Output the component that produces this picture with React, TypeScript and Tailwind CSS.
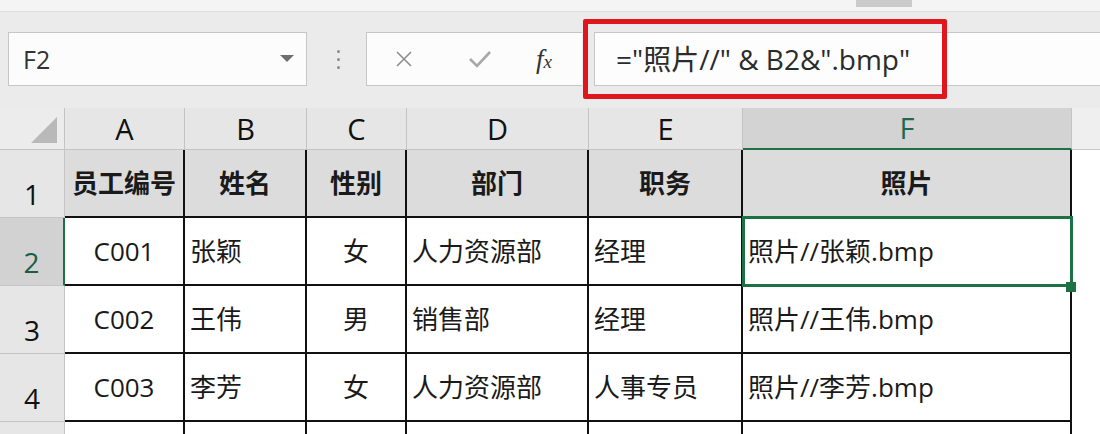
const colLetters = ['A', 'B', 'C', 'D', 'E', 'F'];

const rows = [
  ['员工编号', '姓名', '性别', '部门', '职务', '照片'],
  ['C001', '张颖', '女', '人力资源部', '经理', '照片//张颖.bmp'],
  ['C002', '王伟', '男', '销售部', '经理', '照片//王伟.bmp'],
  ['C003', '李芳', '女', '人力资源部', '人事专员', '照片//李芳.bmp'],
];

const align = [
  'justify-center',
  'justify-start pl-[5px]',
  'justify-center',
  'justify-start pl-[5px]',
  'justify-start pl-[5px]',
  'justify-start pl-[5px]',
];

export default function App() {
  return (
    <div className="h-[434px] w-[1100px] overflow-hidden bg-[#ebebeb] font-['Open_Sans','Noto_Sans_CJK_SC',sans-serif] text-[#1a1a1a]">
      {/* top strip */}
      <div className="h-[12px] border-b border-[#dedede] bg-[#f4f4f4] pl-[856px]">
        <div className="h-[7px] w-[56px] bg-[#cbcbcb]" />
      </div>

      {/* formula toolbar */}
      <div className="relative flex h-[96px] items-start pt-[20px]">
        <div className="ml-[8px] flex h-[54px] w-[299px] items-center justify-between border border-[#c6c6c6] bg-[#fcfcfc] pl-[14px] pr-[12px]">
          <span className="text-[25px] leading-none text-[#333]">F2</span>
          <svg width="14" height="8" viewBox="0 0 14 8">
            <polygon points="0,0 14,0 7,7" fill="#6f6f6f" />
          </svg>
        </div>
        <div className="ml-[29px] flex h-[54px] w-[4px] flex-col items-center justify-center gap-[5px]">
          <div className="h-[3px] w-[3px] rounded-full bg-[#8c8c8c]" />
          <div className="h-[3px] w-[3px] rounded-full bg-[#8c8c8c]" />
          <div className="h-[3px] w-[3px] rounded-full bg-[#8c8c8c]" />
        </div>
        <div className="ml-[26px] flex h-[54px] w-[216px] items-center border-y border-l border-[#c6c6c6] bg-[#fcfcfc]">
          <svg className="ml-[28px]" width="18" height="18" viewBox="0 0 18 18">
            <path d="M2 2 L16 16 M16 2 L2 16" stroke="#8e8e8e" strokeWidth="1.6" />
          </svg>
          <svg className="ml-[55px]" width="24" height="20" viewBox="0 0 24 20">
            <path d="M2 10 L9 17 L22 3" stroke="#a8a8a8" strokeWidth="2.6" fill="none" />
          </svg>
          <span className="ml-[44px] font-['Liberation_Serif',serif] text-[27px] italic leading-none text-[#333]">
            f<span className="text-[19px]">x</span>
          </span>
        </div>
        <div className="ml-[12px] flex h-[54px] flex-1 items-center border border-r-0 border-[#c6c6c6] bg-[#fdfdfd] pl-[21px]">
          <span className="text-[28px] leading-none text-[#2b2b2b]">="照片//" &amp; B2&amp;".bmp"</span>
        </div>
        {/* red highlight annotation */}
        <div className="absolute left-[583px] top-[7px] h-[80px] w-[364px] rounded-[2px] border-[5px] border-[#e0161d]" />
      </div>

      {/* sheet grid */}
      <div className="relative grid grid-cols-[65px_120px_122px_100px_182px_154px_329px_1fr] grid-rows-[42px_68px_68px_68px_68px_12px] bg-white">
        <div className="flex items-end justify-end border-b border-r border-[#c4c4c4] bg-[#ececec] pb-[6px] pr-[7px]">
          <svg width="26" height="26" viewBox="0 0 26 26">
            <polygon points="26,0 26,26 0,26" fill="#b9b9b9" />
          </svg>
        </div>
        {colLetters.map((c) =>
          c === 'F' ? (
            <div
              key={c}
              className="flex items-center justify-center border-b-2 border-r border-b-[#1e7145] border-r-[#c4c4c4] bg-[#d3d3d3] text-[29px] text-[#1c6b4e]"
            >
              {c}
            </div>
          ) : (
            <div
              key={c}
              className="flex items-center justify-center border-b border-r border-[#c4c4c4] bg-[#e6e6e6] text-[29px] text-[#111]"
            >
              {c}
            </div>
          ),
        )}
        <div className="border-b border-[#c8c8c8] bg-[#efefef]" />

        {rows.map((row, r) => (
          <Row key={r} index={r} row={row} />
        ))}

        <div className="border-r border-[#c4c4c4] bg-[#e6e6e6]" />
        {colLetters.map((c) => (
          <div key={c} className="border-r-2 border-[#111] bg-white" />
        ))}
        <div className="bg-white" />

        {/* fill handle of the active cell */}
        <div className="absolute left-[1066px] top-[174px] z-20 h-[10px] w-[10px] bg-[#1e7145]" />
      </div>
    </div>
  );
}

function Row({ index, row }: { index: number; row: string[] }) {
  const selected = index === 1;
  const header = index === 0;
  return (
    <>
      <div
        className={
          selected
            ? 'flex items-end justify-center border-b border-r-2 border-b-[#c4c4c4] border-r-[#1e7145] bg-[#d2d2d2] pb-[2px] text-[28px] text-[#1c5e45]'
            : 'flex items-end justify-center border-b border-r border-[#c4c4c4] bg-[#e6e6e6] pb-[2px] text-[28px] text-[#111]'
        }
      >
        {index + 1}
      </div>
      {row.map((text, c) => (
        <div
          key={c}
          className={
            'relative flex items-center border-b-2 border-r-2 border-[#111] text-[26px] ' +
            (header ? 'justify-center bg-[#dcdcdc] font-bold' : 'bg-white ' + align[c])
          }
        >
          <span className="leading-none">{text}</span>
          {selected && c === 5 && (
            <div className="absolute -left-[1px] -top-[2px] z-10 h-[71px] w-[331px] border-[3px] border-[#1e7145]" />
          )}
        </div>
      ))}
      <div className="bg-white" />
    </>
  );
}
